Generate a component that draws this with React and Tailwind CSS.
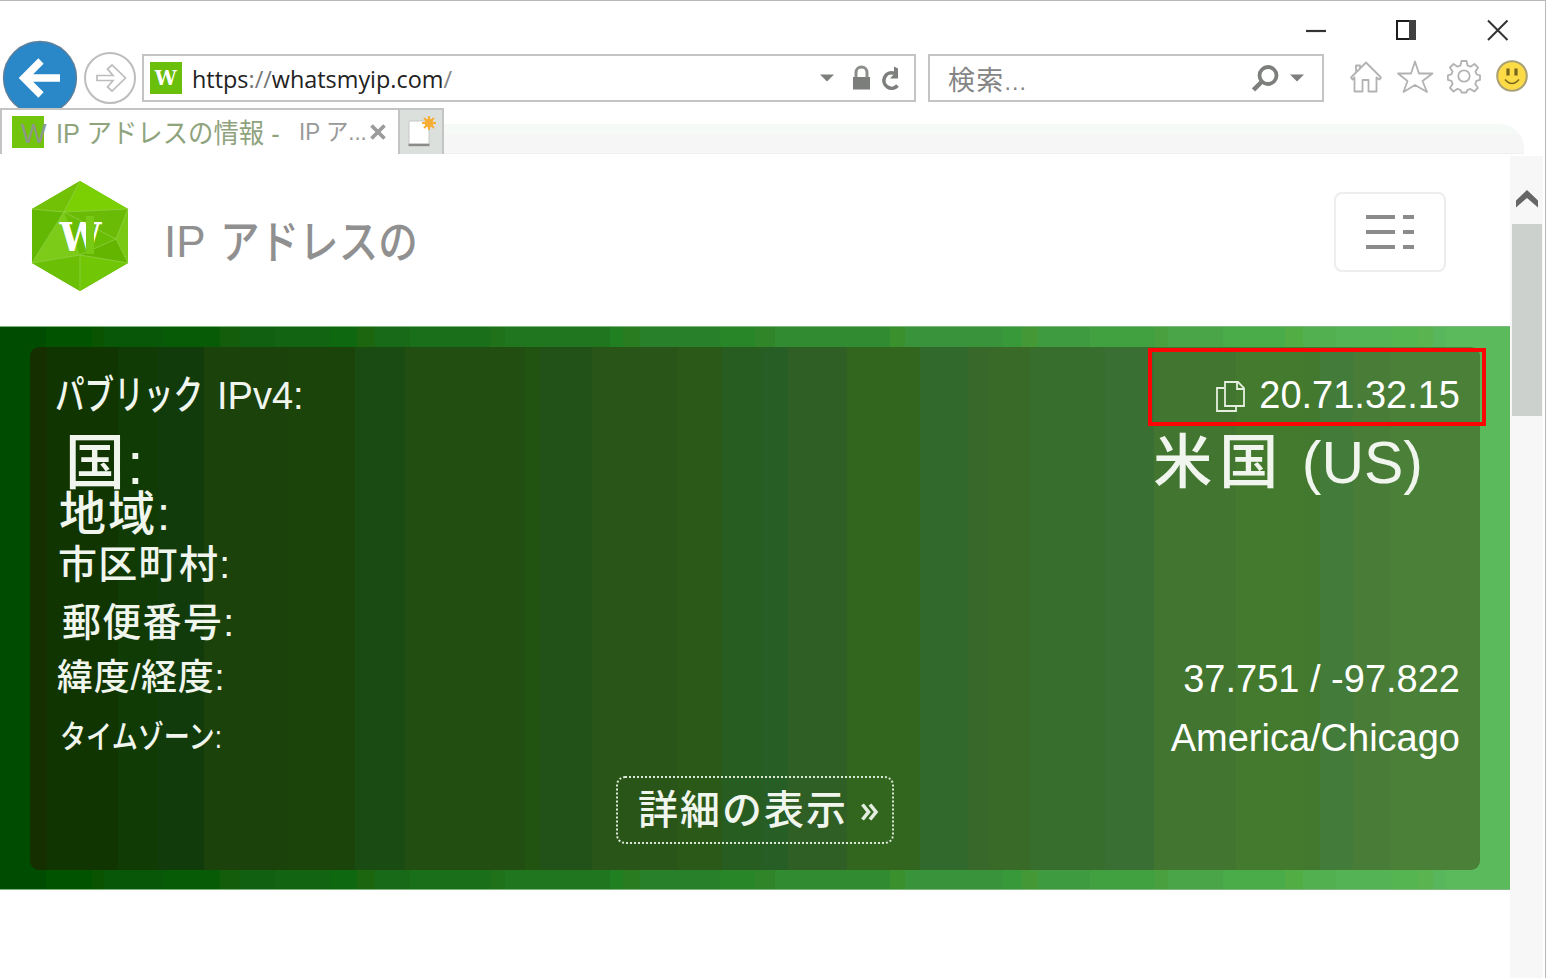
import React from "react";

const OUTER = [
  [46, "#004c00"], [92, "#025300"], [104, "#0a5300"], [162, "#085709"], [220, "#075b06"], [240, "#145e0b"],
  [275, "#115f11"], [330, "#126412"], [357, "#0e680f"], [375, "#1c660f"], [410, "#186a19"], [490, "#196f1a"],
  [505, "#20721a"], [610, "#20761f"], [623, "#1f7f21"], [640, "#2a7c20"], [720, "#28802a"], [755, "#288628"],
  [775, "#308529"], [890, "#308b31"], [905, "#39902c"], [1003, "#39933a"], [1022, "#38993a"], [1038, "#459836"],
  [1090, "#3f9b3f"], [1155, "#41a040"], [1168, "#4aa03e"], [1223, "#4aa548"], [1285, "#4aab49"], [1303, "#52ad45"],
  [1336, "#53b050"], [1392, "#54b354"], [1418, "#55b550"], [1433, "#5ab550"], [1446, "#58b65c"], [1510, "#5bbb5c"],
];

const CARD = [
  [17, "#152f00"], [88, "#113500"], [128, "#103b04"], [174, "#113b0b"], [257, "#1b420b"], [325, "#1b440a"],
  [375, "#194b12"], [495, "#224e12"], [510, "#205410"], [562, "#235219"], [648, "#2a5518"], [692, "#2b5a18"],
  [732, "#285d22"], [758, "#265e25"], [817, "#305f25"], [890, "#32661f"], [938, "#31682b"], [960, "#38682a"],
  [1000, "#3a6a28"], [1075, "#386e2d"], [1124, "#396f32"], [1206, "#42752f"], [1274, "#437a2d"], [1290, "#43792f"],
  [1323, "#437b3b"], [1360, "#497c37"], [1450, "#4a8037"],
];

function bands(list) {
  let from = 0;
  const stops = list.map(([to, color]) => {
    const stop = `${color} ${from}px ${to}px`;
    from = to;
    return stop;
  });
  return { backgroundImage: `linear-gradient(to right, ${stops.join(", ")})` };
}

function Caret() {
  return (
    <svg className="block h-[8px] w-[14px]" viewBox="0 0 14 8">
      <path d="M0 .5h14L7 7.500z" fill="#7c7f7c" />
    </svg>
  );
}

function TitleBar() {
  return (
    <div className="flex h-[53px] justify-end pr-[34px] pt-[18px]">
      <svg className="h-[24px] w-[206px]" viewBox="0 0 206 24" fill="none">
        <path d="M1 12h20" stroke="#333" strokeWidth="2.200" />
        <rect x="92" y="2" width="18" height="18" stroke="#1c1c1c" strokeWidth="2" />
        <path d="M107.500 1v20" stroke="#404040" strokeWidth="7" />
        <path d="M183 1.500l19.500 19.500M202.500 1.500L183 21" stroke="#333" strokeWidth="2" />
      </svg>
    </div>
  );
}

function NavRow() {
  return (
    <div className="flex h-[54px] items-start">
      <svg className="-mt-[14px] ml-[2px] h-[78px] w-[76px] shrink-0" viewBox="0 0 76 78">
        <circle cx="38" cy="38" r="36.500" fill="#2a87c8" stroke="#617f96" strokeWidth="1.300" />
        <path d="M58 38H22M39 21L22 38l17 17" fill="none" stroke="#fff" strokeWidth="7.500" />
      </svg>
      <svg className="-mt-[2px] ml-[6px] h-[52px] w-[52px] shrink-0" viewBox="0 0 52 52" fill="none" stroke="#bdbdbd">
        <circle cx="26" cy="26" r="25" strokeWidth="2" />
        <path d="M13 23.500h16l-5.500-6.500 4.500-4L41.500 26 28 39l-4.500-4 5.500-6.500H13z" strokeWidth="1.700" />
      </svg>
      <div className="ml-[6px] flex h-[48px] w-[774px] shrink-0 items-center border-2 border-[#c4c4c4] pl-[6px]">
        <span className="flex h-[32px] w-[32px] items-center justify-center bg-[#6abf0a] pb-[1px] font-['DejaVu_Serif'] text-[21px] font-bold text-white">
          <span className="inline-block scale-x-[0.93]">W</span>
        </span>
        <span className="ml-[10px] w-[628px] whitespace-nowrap pt-[3px] font-['Open_Sans',sans-serif] text-[23.400px] text-[#222]">
          https<span className="text-[#777]">://</span>whatsmyip.com<span className="text-[#888]">/</span>
        </span>
        <Caret />
        <svg className="ml-[18px] h-[26px] w-[19px]" viewBox="0 0 19 26">
          <path d="M4 13V7.500a5.500 5.500 0 0 1 11 0V13" fill="none" stroke="#8b8e8b" strokeWidth="3" />
          <path d="M1 12h17v12.500H1z" fill="#7b7e7b" />
        </svg>
        <svg className="ml-[10px] h-[26px] w-[18px]" viewBox="0 0 18 26">
          <path d="M16.500 20.500A7.700 7.700 0 1 1 13 8.200" fill="none" stroke="#7c7f7c" strokeWidth="3.600" />
          <path d="M13 1.500l4 2V13.500H9L13 9z" fill="#7c7f7c" />
        </svg>
      </div>
      <div className="ml-[12px] flex h-[48px] w-[396px] shrink-0 items-center border-2 border-[#c4c4c4] pl-[18px]">
        <span className="w-[304px] pt-[2px] font-['Noto_Sans_CJK_JP',sans-serif] text-[27px] leading-none tracking-[1.200px] text-[#858585]">
          検索<span className="font-['Liberation_Sans'] text-[23px]">...</span>
        </span>
        <svg className="h-[28px] w-[27px]" viewBox="0 0 27 28" fill="none" stroke="#7c7f7c">
          <circle cx="16" cy="11.500" r="8.500" strokeWidth="3.800" />
          <path d="M10 17.500L1.500 26" strokeWidth="4.500" />
        </svg>
        <span className="ml-[11px]"><Caret /></span>
      </div>
      <svg className="ml-[25px] mt-[5px] h-[36px] w-[180px] shrink-0" viewBox="0 0 180 36" fill="none" stroke="#b2b2b2" strokeWidth="1.800" strokeLinejoin="round">
        <path d="M2 18.500L17 3.500l15 15-1.500 2-3-2V32.500h-8V21h-6v11.500H5.500V18.500l-2 2zM7 12.500V6.500h4v3" />
        <path d="M66 2.500l4 12h13.500L73.500 22l4.500 11L66 26l-11.500 7 4-11-9.500-7.500h13z" />
        <circle cx="115" cy="17" r="5.700" />
        <path d="M112.500 2h5l1 4.500 3 1.200 4-2.700 3.600 3.600-2.600 4 1.200 2.900 3.300.800v4.600l-3.500 1-1.200 3 2.600 4-3.600 3.600-4-2.600-3 1.200-.8 2.400h-5l-1-2.500-3-1.200-4 2.700-3.600-3.600 2.700-4-1.200-3-3.500-1v-4.600l3.500-.9 1.200-2.900-2.700-4 3.600-3.500 4 2.700 3-1.200z" />
        <circle cx="163" cy="17" r="14.800" fill="#fcdb46" stroke="#aaa075" strokeWidth="2" />
        <g stroke="#77651d" fill="none">
          <path d="M159 9.500v7M167 9.500v7" strokeWidth="3.200" />
          <path d="M156 20.500q7 8 14 0" strokeWidth="1.600" />
        </g>
      </svg>
    </div>
  );
}

function TabRow() {
  return (
    <div className="relative flex h-[46px] items-stretch bg-white">
      <div className="flex w-[400px] shrink-0 items-start overflow-hidden whitespace-nowrap border-x-2 border-t-2 border-[#c4c4c4] bg-white pl-[10px] pt-[6px] font-['Liberation_Sans','Noto_Sans_CJK_JP',sans-serif] leading-[32px]">
        <span className="h-[32px] w-[32px] shrink-0 bg-[#72c50c] pl-[9px] text-[#8f978a]">
          <span className="inline-block pt-[2px] text-[27px]">W</span>
        </span>
        <span className="ml-[12px] w-[243px] shrink-0 pt-[2px] text-[27px] text-[#8fa37d]">
          <span className="inline-block origin-left scale-x-[0.94]">IP アドレスの情報 -</span>
        </span>
        <span className="w-[71px] shrink-0 text-[24px] text-[#999]">
          <span className="inline-block origin-left scale-x-[0.93]">IP ア...</span>
        </span>
        <svg className="mt-[8px] h-[16px] w-[16px] shrink-0" viewBox="0 0 16 16">
          <path d="M1.500 1.500l13 13m0-13l-13 13" stroke="#9b9b9b" strokeWidth="3.800" />
        </svg>
      </div>
      <div className="w-[44px] shrink-0 border-r-2 border-t-2 border-[#c4c4c4] bg-[#dce0dc]">
        <svg className="ml-[6px] mt-[4px] h-[36px] w-[34px]" viewBox="0 0 34 36">
          <path d="M3 7h20v23H3z" fill="#fff" stroke="#c5c8c5" />
          <path d="M2.500 31h21" stroke="#8b8b8b" strokeWidth="2.400" />
          <circle cx="23" cy="9" r="4.500" fill="#fbb53b" />
          <path d="M23 2v14M16 9h14M18 4l10 10M28 4L18 14" stroke="#f6ae39" strokeWidth="2" />
        </svg>
      </div>
      <div className="mt-[16px] h-[30px] w-[1080px] rounded-tr-[24px] border-b border-[#edf0ed] bg-[linear-gradient(#f6faf7_0_10px,#f6f6f6_10px)]" />
    </div>
  );
}

function Logo() {
  return (
    <svg className="h-[112px] w-[98px] shrink-0" viewBox="0 0 98 112">
      <path d="M49 1l48 28v54l-48 28L1 83V29z" fill="#69bd05" />
      <path d="M49 1L1 29l32 3z" fill="#73c106" />
      <path d="M49 1l48 28-64 3z" fill="#7bd003" />
      <path d="M1 29l32 3L1 83z" fill="#63b803" />
      <path d="M33 32L1 83l48-8z" fill="#7bcb18" />
      <path d="M33 32l64-3-12 30z" fill="#69bb06" />
      <path d="M97 29v54L85 59z" fill="#7ac914" />
      <path d="M85 59l12 24-48-8z" fill="#63b500" />
      <path d="M1 83l48-8v36z" fill="#6bc005" />
      <path d="M49 75l48 8-48 28z" fill="#71c705" />
      <path d="M49 1L33 32 1 83l48-8 48 8-12-24L33 32M1 29l32 3 64-3-12 30-36 16v36" fill="none" stroke="#91d044" strokeWidth=".8" />
      <text x="49.500" y="71" textAnchor="middle" textLength="42" lengthAdjust="spacingAndGlyphs" fontFamily="DejaVu Serif" fontWeight="bold" fontSize="39" fill="#fff">W</text>
      <path d="M55 36h8v38h-8z" fill="#78c913" />
    </svg>
  );
}

function SiteHeader() {
  return (
    <div className="flex h-[172px] items-start pl-[31px] pr-[64px] pt-[26px]">
      <Logo />
      <div className="ml-[35px] mt-[36px] flex flex-1 whitespace-nowrap font-['Liberation_Sans','Noto_Sans_CJK_JP',sans-serif] leading-[52px] text-[#909090]">
        <span className="w-[56px] text-[44px]">IP</span>
        <span className="inline-block origin-left scale-x-[0.86] text-[46px] font-medium">アドレスの</span>
      </div>
      <div className="mt-[12px] flex h-[80px] w-[112px] items-center justify-center rounded-[8px] border-2 border-[#ededed]">
        <svg className="h-[38px] w-[50px]" viewBox="0 0 50 38" stroke="#8a8c8a" strokeWidth="4">
          <path d="M1 4h29M38 4h11M1 19h29M38 19h11M1 34h29M38 34h11" />
        </svg>
      </div>
    </div>
  );
}

function InfoCard() {
  return (
    <div className="h-[564px] w-[1510px] border-y border-[#7fb87f] pl-[30px] pt-[20px]" style={bands(OUTER)}>
      <div
        className="flex h-[523px] w-[1450px] flex-col whitespace-nowrap rounded-[9px] pt-[19px] font-['Liberation_Sans','Noto_Sans_CJK_JP',sans-serif] font-medium leading-none text-[#f0f5ee]"
        style={bands(CARD)}
      >
        <div className="relative flex h-[58px] items-center justify-between pl-[25px] pr-[20px]">
          <div className="flex items-center">
            <span className="w-[162px] text-[40px]">
              <span className="inline-block origin-left scale-x-[0.74]">パブリック</span>
            </span>
            <span className="pt-[1px] text-[38px]">IPv4:</span>
          </div>
          <div className="flex items-center text-[38px] text-white">
            <svg className="mr-[14px] mt-[4px] h-[32px] w-[30px]" viewBox="0 0 30 32" fill="none" stroke="#e5efe0" strokeWidth="1.800">
              <path d="M9 7H2v23h19v-5M10 1h13l6 6v18H10zM22 1v7h7" />
            </svg>
            20.71.32.15
          </div>
          <div className="absolute left-[1118px] top-[-18px] h-[78px] w-[338px] border-4 border-[#fb0505]" />
        </div>
        <div className="flex h-[78px] items-center justify-between pl-[35px] pr-[57px]">
          <span className="pt-[1px] text-[60px] leading-[54px] tracking-[2px]">国:</span>
          <span className="text-[59px]">
            <span className="tracking-[7px]">米国</span> (US)
          </span>
        </div>
        <div className="flex h-[24px] items-center pl-[29px] text-[47px] leading-[42px] tracking-[2px]">地域:</div>
        <div className="flex h-[76px] items-center pl-[28px] text-[39px] tracking-[1.300px]">市区町村:</div>
        <div className="flex h-[40px] items-center pl-[32px] text-[39px] tracking-[1.300px]">郵便番号:</div>
        <div className="flex h-[72px] items-center justify-between pl-[27px] pr-[20px]">
          <span className="text-[36px] tracking-[0.700px]">緯度/経度:</span>
          <span className="pt-[2px] text-[38px] text-white">37.751 / -97.822</span>
        </div>
        <div className="flex h-[46px] items-center justify-between pl-[30px] pr-[20px]">
          <span className="inline-block origin-left scale-x-[0.815] text-[32px]">タイムゾーン:</span>
          <span className="pt-[1px] text-[38px] text-white">America/Chicago</span>
        </div>
        <div className="ml-[586px] mt-[16px] flex h-[68px] w-[278px] items-center rounded-[9px] border-2 border-dotted border-[#dce8d8] pl-[20px]">
          <span className="w-[223px] text-[40px] tracking-[2px]">詳細の表示</span>
          <svg className="mt-[4px] h-[18px] w-[18px]" viewBox="0 0 18 18" fill="none" stroke="#e4ede1" strokeWidth="3.600">
            <path d="M1.500 1.500L7.500 9l-6 7.500M9 1.500L15 9l-6 7.500" />
          </svg>
        </div>
      </div>
    </div>
  );
}

function Scrollbar() {
  return (
    <div className="mt-[2px] flex h-[822px] w-[33px] shrink-0 flex-col items-center bg-[#f7f7f7]">
      <svg className="mt-[33px] h-[20px] w-[24px]" viewBox="0 0 24 20">
        <path d="M1 18.500v-7L12 1l11 10.500v7L12 9z" fill="#666" />
      </svg>
      <div className="mt-[15px] h-[192px] w-[30px] bg-[#cdd1cd]" />
    </div>
  );
}

export default function App() {
  return (
    <div className="h-[978px] w-[1546px] overflow-hidden border-r border-t border-[#b8b8b8] bg-white">
      <TitleBar />
      <NavRow />
      <TabRow />
      <div className="flex">
        <div className="w-[1510px] shrink-0">
          <SiteHeader />
          <InfoCard />
        </div>
        <Scrollbar />
      </div>
    </div>
  );
}
